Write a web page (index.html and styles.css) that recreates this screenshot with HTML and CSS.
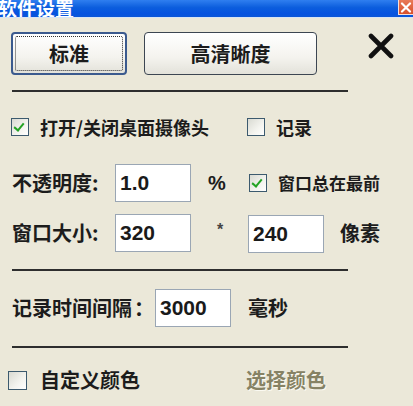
FILE: index.html
```html
<!DOCTYPE html>
<html>
<head>
<meta charset="utf-8">
<link rel="stylesheet" href="styles.css">
</head>
<body>
<div class="window">
  <div class="titlebar">
    <span class="title">软件设置</span>
    <span class="close"><svg width="12" height="11" viewBox="0 0 12 11"><path d="M2 1.5 L10 9.5 M10 1.5 L2 9.5" stroke="#fff" stroke-width="2.2" stroke-linecap="round"/></svg></span>
  </div>
  <div class="content">
    <div class="btnrow">
      <button class="btn std"><span class="focus">标准</span></button>
      <button class="btn hd">高清晰度</button>
      <svg class="bigx" width="26" height="26" viewBox="0 0 26 26"><path d="M3 3 L23 23 M23 3 L3 23" stroke="#111" stroke-width="4.6" stroke-linecap="round"/></svg>
    </div>
    <div class="hr"></div>
    <div class="row row1">
      <label class="opt w236"><span class="cb checked"></span><span class="lbl">打开/关闭桌面摄像头</span></label>
      <label class="opt"><span class="cb"></span><span class="lbl">记录</span></label>
    </div>
    <div class="grid">
      <span class="big">不透明度:</span>
      <span class="input">1.0</span>
      <span class="mid">%</span>
      <label class="opt pad1"><span class="cb checked"></span><span class="lbl sm">窗口总在最前</span></label>
      <span class="big">窗口大小:</span>
      <span class="input">320</span>
      <span class="mid star">*</span>
      <span class="pair"><span class="input">240</span><span class="big unit">像素</span></span>
    </div>
    <div class="hr hr2"></div>
    <div class="row row4">
      <span class="big w143">记录时间间隔<span class="colon">：</span></span>
      <span class="input">3000</span>
      <span class="big unit2">毫秒</span>
    </div>
    <div class="hr hr3"></div>
    <div class="row row5">
      <label class="opt w238"><span class="cb cb5"></span><span class="big lbl5">自定义颜色</span></label>
      <span class="big disabled">选择颜色</span>
    </div>
  </div>
</div>
</body>
</html>
```
FILE: styles.css
```css
html, body {
  margin: 0;
  padding: 0;
}
body {
  width: 413px;
  height: 406px;
  overflow: hidden;
  background: #ebe8d9;
  font-family: "Noto Sans CJK SC", "Noto Sans", sans-serif;
  font-weight: bold;
  color: #1c1c1c;
}
.window {
  width: 413px;
  height: 406px;
}
.titlebar {
  height: 18px;
  background: linear-gradient(#2f7ff0, #0b5ddd 45%, #0653e0 80%, #0a56d8);
  display: flex;
  justify-content: space-between;
  align-items: flex-start;
  border-bottom: 1px solid #d8e4f4;
  box-sizing: border-box;
  overflow: hidden;
}
.title {
  color: #fff;
  font-size: 19px;
  line-height: 17px;
  margin-left: -2px;
  margin-top: -1px;
}
.close {
  width: 15px;
  height: 15px;
  background: linear-gradient(#e87a58, #d9502c);
  border: 1px solid #f4e0d8;
  border-top: none;
  border-right: none;
  box-sizing: border-box;
  display: flex;
  align-items: center;
  justify-content: center;
}
.content {
  padding-left: 12px;
  display: flex;
  flex-direction: column;
}
.btnrow {
  margin-top: 14px;
  height: 43px;
  display: flex;
  align-items: flex-start;
}
.btn {
  height: 43px;
  margin: 0;
  padding: 0;
  font-family: "Noto Sans CJK SC", sans-serif;
  font-weight: bold;
  font-size: 20px;
  color: #1c1c1c;
  background: linear-gradient(#ffffff, #f4f3ee 60%, #e3e2da);
  border-radius: 4px;
  box-sizing: border-box;
  display: flex;
  align-items: center;
  justify-content: center;
}
.std {
  width: 116px;
  margin-left: -1px;
  border: 2px solid #3b5a8e;
  padding: 2px;
}
.focus {
  width: 100%;
  height: 100%;
  border: 1px dotted #333;
  box-sizing: border-box;
  display: flex;
  align-items: center;
  justify-content: center;
  border-radius: 2px;
}
.hd {
  width: 173px;
  margin-left: 17px;
  border: 1px solid #3c4652;
}
.bigx {
  margin-left: 51px;
  margin-top: 1px;
}
.hr {
  margin-top: 15px;
  width: 336px;
  height: 2px;
  background: #2e2e2e;
}
.hr2 { margin-top: 17px; }
.hr3 { margin-top: 19px; }
.row {
  display: flex;
  align-items: center;
}
.row1 {
  margin-top: 24px;
  height: 22px;
}
.opt {
  display: flex;
  align-items: center;
}
.w236 { width: 236px; margin-left: -1px; }
.w238 { width: 238px; margin-left: -4px; }
.cb {
  width: 18px;
  height: 18px;
  box-sizing: border-box;
  border: 1px solid #3c5a6e;
  background: linear-gradient(135deg, #d9dad2, #f4f4ef 60%, #ffffff);
  position: relative;
  flex: none;
}
.cb.checked::after {
  content: "";
  position: absolute;
  left: 4px;
  top: 2px;
  width: 4px;
  height: 8px;
  border-right: 2.5px solid #23a323;
  border-bottom: 2.5px solid #23a323;
  transform: rotate(40deg);
}
.lbl {
  margin-left: 11px;
  font-size: 18px;
  line-height: 22px;
}
.lbl.sm { font-size: 17px; }
.grid {
  margin-top: 26px;
  display: grid;
  grid-template-columns: 103px 76px 57px auto;
  grid-template-rows: 38px 39px;
  row-gap: 11px;
  align-items: center;
}
.big {
  font-size: 20px;
  line-height: 24px;
}
.input {
  height: 100%;
  width: 76px;
  box-sizing: border-box;
  background: #fff;
  border: 1px solid #9aa6b4;
  font-family: "Liberation Sans", Arial, sans-serif;
  font-weight: bold;
  font-size: 21px;
  color: #1a1a1a;
  padding-left: 4px;
  display: flex;
  align-items: center;
}
.grid .input { height: 38px; }
.mid {
  justify-self: center;
  font-family: "Liberation Sans", Arial, sans-serif;
  font-size: 20px;
  font-weight: bold;
  margin-left: -5px;
}
.star {
  font-size: 16px;
  color: #444;
  margin-left: 1px;
  margin-top: -6px;
}
.pad1 { margin-left: 1px; }
.pair {
  display: flex;
  align-items: center;
  height: 39px;
}
.pair .input { height: 38px; margin-top: 2px; }
.unit { margin-left: 16px; }
.row4 {
  margin-top: 18px;
  height: 38px;
}
.w143 {
  width: 143px;
  display: flex;
  align-items: center;
}
.colon {
  margin-left: 2px;
}
.row4 .input { height: 38px; }
.unit2 { margin-left: 17px; }
.row5 {
  margin-top: 20px;
  height: 24px;
}
.cb5 { width: 19px; height: 19px; }
.lbl5 { margin-left: 13px; }
.disabled {
  color: #868264;
  text-shadow: 1px 1px 0 #fbfaf2;
}
```
